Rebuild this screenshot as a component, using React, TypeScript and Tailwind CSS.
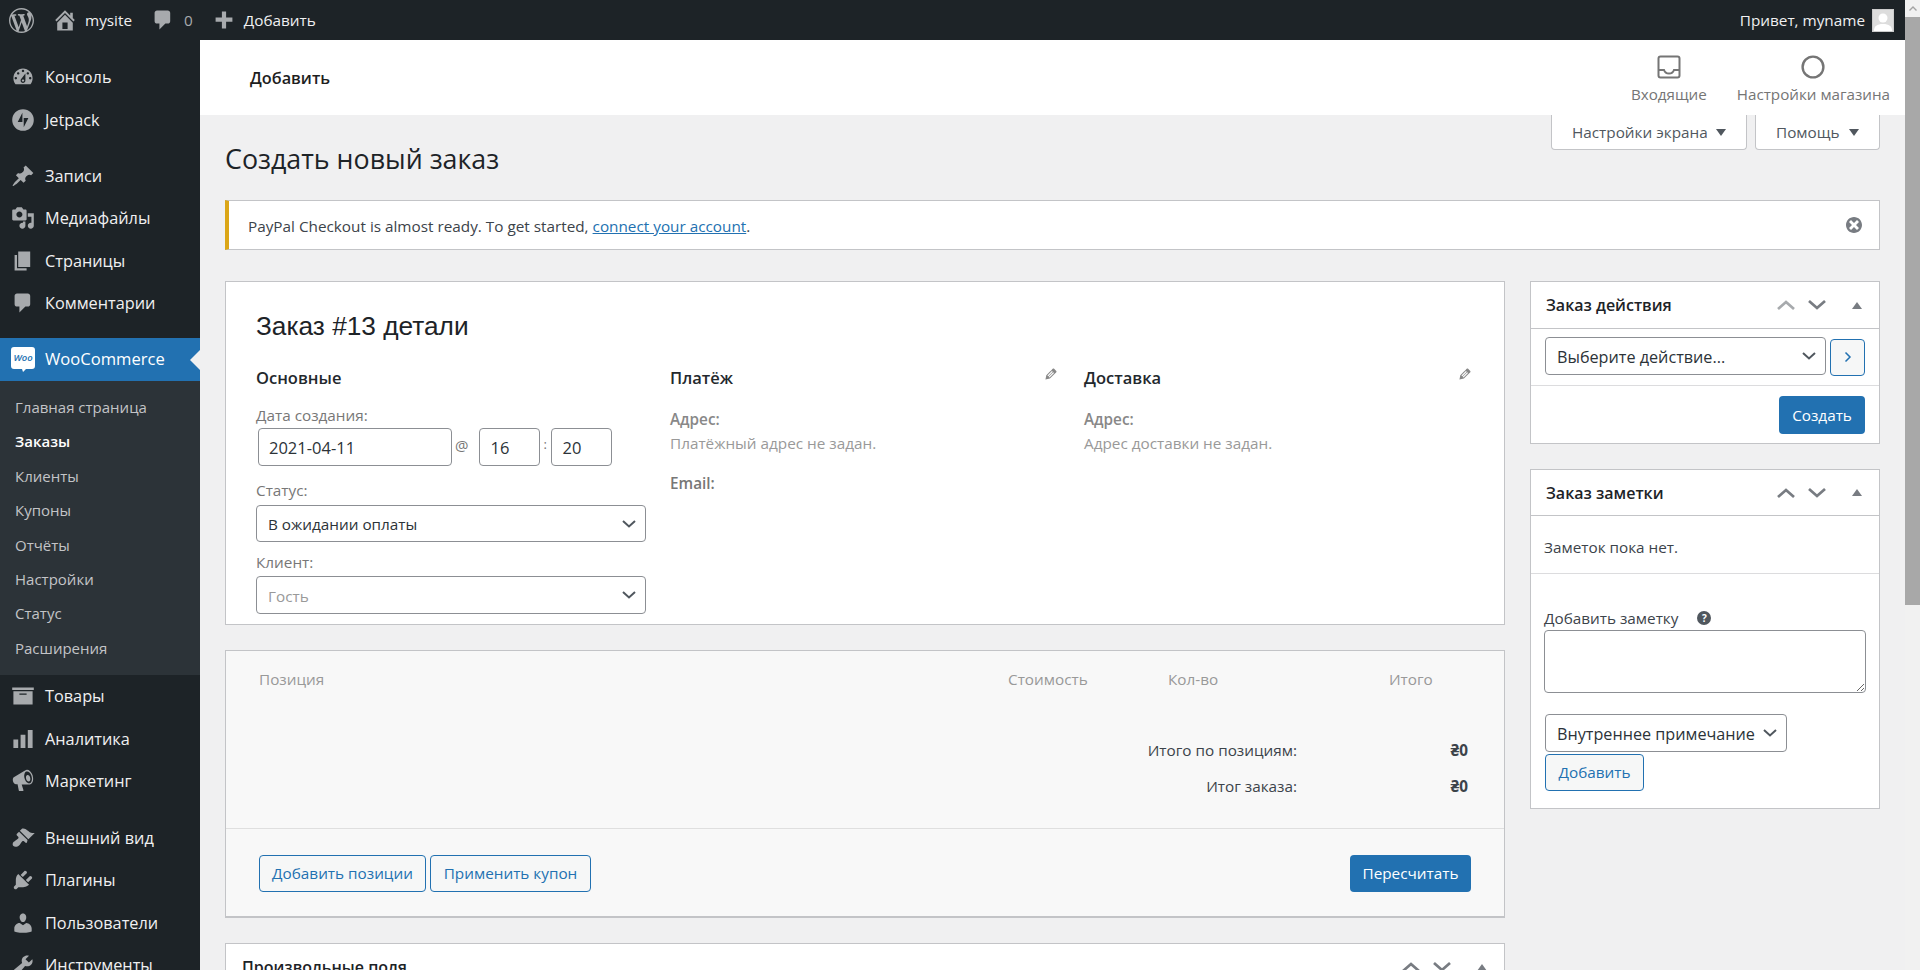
import React from "react";

const P: Record<string, string> = {
  dashboard: "M3.76 16h12.48c1.1-1.37 1.76-3.11 1.76-5 0-4.42-3.58-8-8-8s-8 3.58-8 8c0 1.89.66 3.63 1.76 5zM10 4c.55 0 1 .45 1 1s-.45 1-1 1-1-.45-1-1 .45-1 1-1zM6 6c.55 0 1 .45 1 1s-.45 1-1 1-1-.45-1-1 .45-1 1-1zm8 0c.55 0 1 .45 1 1s-.45 1-1 1-1-.45-1-1 .45-1 1-1zm-5.37 5.55L12 7v6c0 1.1-.9 2-2 2s-2-.9-2-2c0-.57.24-1.08.63-1.45zM4 10c.55 0 1 .45 1 1s-.45 1-1 1-1-.45-1-1 .45-1 1-1zm12 0c.55 0 1 .45 1 1s-.45 1-1 1-1-.45-1-1 .45-1 1-1zm-5 3c0-.55-.45-1-1-1s-1 .45-1 1 .45 1 1 1 1-.45 1-1z",
  jetpack: "M10 1a9 9 0 1 0 0 18 9 9 0 0 0 0-18zM9.5 4v7.6H5.6zM10.6 16V8.4h3.9z",
  pin: "M10.44 3.02l1.82-1.82 6.36 6.35-1.83 1.82c-1.05-.68-2.48-.57-3.41.36l-.75.75c-.92.93-1.04 2.35-.35 3.41l-1.83 1.82-2.41-2.41-2.8 2.79c-.42.42-3.38 2.71-3.8 2.29s1.86-3.39 2.28-3.81l2.79-2.79L4.1 9.36l1.83-1.82c1.05.69 2.48.57 3.4-.36l.75-.75c.93-.92 1.05-2.35.36-3.41z",
  media: "M13 11V4c0-.55-.45-1-1-1h-1.67L9 1H5L3.67 3H2c-.55 0-1 .45-1 1v7c0 .55.45 1 1 1h10c.55 0 1-.45 1-1zM7 4.5c1.38 0 2.5 1.12 2.5 2.5S8.38 9.5 7 9.5 4.5 8.38 4.5 7 5.62 4.5 7 4.5zM14 6h5v10.5c0 1.38-1.12 2.5-2.5 2.5S14 17.88 14 16.5s1.12-2.5 2.5-2.5c.17 0 .34.02.5.05V9h-3V6zm-4 8.05V13h2v3.5c0 1.38-1.12 2.5-2.5 2.5S7 17.88 7 16.5 8.12 14 9.5 14c.17 0 .34.02.5.05z",
  page: "M6 15V2h10v13H6zm-1 1h8v2H3V5h2v11z",
  comment: "M5 2h9c1.1 0 2 .9 2 2v7c0 1.1-.9 2-2 2h-2l-5 5v-5H5c-1.1 0-2-.9-2-2V4c0-1.1.9-2 2-2z",
  archive: "M19 3v2H1V3h18zM2 6h16v11H2V6zm11 3V8H7v1h6z",
  chart: "M18 2.5v15h-4v-15h4zM12 6.5v11H8v-11h4zM6 10.5v7H2v-7h4z",
  megaphone: "M18.15 5.94c.46 1.62.38 3.22-.02 4.48-.42 1.28-1.26 2.18-2.3 2.48-.16.06-.26.06-.4.06-.2.04-.4.04-.4.04H8.9l1.5 4.8c.02.14-.06.26-.14.34-.08.1-.24.16-.34.16H6.95c-.1 0-.26-.06-.34-.16-.08-.08-.16-.2-.14-.34l-1-5.1H4.25c-.5.06-1.08-.18-1.54-.62s-.88-1.08-1.06-1.88c-.24-.8-.2-1.56-.02-2.2.18-.62.58-1.08 1.06-1.3l9-5.42c.3-.2.6-.36.98-.46 1.04-.3 2.24.1 3.22.98s1.76 2.18 2.26 3.86zm-2.6 5.98c.4-.1.74-.34 1.04-.7.58-.7.86-1.76.86-3.04 0-.64-.1-1.3-.28-1.98-.34-1.36-1.02-2.5-1.78-3.24s-1.68-1.1-2.46-.88c-.82.22-1.4.96-1.7 2-.32 1.04-.28 2.36.06 3.72.38 1.36 1 2.5 1.8 3.24.78.74 1.62 1.1 2.46.88zM13.6 5c1-.3 2 .7 2.4 2.2.4 1.5 0 2.9-1 3.2-1 .2-2-.8-2.4-2.3-.4-1.5 0-2.8 1-3.1z",
  brush: "M14.48 11.06L7.41 3.99l1.5-1.5c.5-.56 2.3-.47 3.51.32 1.21.8 1.43 1.28 2.91 2.1 1.18.64 2.45 1.26 4.45.85zm-.71.71L6.7 4.7 4.93 6.47c-.39.39-.39 1.02 0 1.41l1.06 1.06c.39.39.39 1.03 0 1.42-.6.6-1.43 1.11-2.21 1.69-.35.26-.7.53-1.01.84C1.43 13.23.91 15.6 2.04 16.73s3.5.61 4.84-.73c.31-.31.58-.66.85-1.01.57-.78 1.08-1.61 1.69-2.21.39-.39 1.02-.39 1.41 0l1.06 1.06c.39.39 1.02.39 1.41 0z",
  plugin: "M13.11 4.36L9.87 7.6 8 5.73l3.24-3.24c.35-.34 1.05-.2 1.56.32.52.51.66 1.21.31 1.55zm-8 1.77l.91-1.12 9.01 9.01-1.19.84c-.71.71-2.63 1.16-3.82 1.16H6.14L4.9 17.26c-.59.59-1.54.59-2.12 0-.59-.58-.59-1.53 0-2.12l1.24-1.24v-3.88c0-1.13.4-3.19 1.09-3.89zm7.26 3.97l3.24-3.24c.34-.35 1.04-.21 1.55.31.52.51.66 1.21.31 1.55l-3.24 3.25z",
  users: "M10 9.25c-2.27 0-2.73-3.44-2.73-3.44C7 4.02 7.82 2 9.97 2c2.16 0 2.98 2.02 2.71 3.81 0 0-.41 3.44-2.68 3.44zm0 2.57L12.72 10c2.39 0 4.52 2.33 4.52 4.53v2.49s-3.65 1.13-7.24 1.13c-3.65 0-7.24-1.13-7.24-1.13v-2.49c0-2.25 1.94-4.48 4.47-4.48z",
  tools: "M16.68 9.77c-1.34 1.34-3.3 1.67-4.95.99l-5.41 6.52c-.99.99-2.59.99-3.58 0s-.99-2.59 0-3.57l6.52-5.42c-.68-1.65-.35-3.61.99-4.95 1.28-1.28 3.12-1.62 4.72-1.06l-2.89 2.89 2.82 2.82 2.86-2.87c.53 1.58.18 3.39-1.08 4.65zM3.81 16.21c.4.39 1.04.39 1.43 0 .4-.4.4-1.04 0-1.43-.39-.4-1.03-.4-1.43 0-.39.39-.39 1.03 0 1.43z",
  home: "M16 8.5l1.53 1.53-1.06 1.06L10 4.62l-6.47 6.47-1.06-1.06L10 2.5l4 4v-2h2v4zm-6-2.46l6 5.99V18H4v-5.97zM12 17v-5H8v5h4z",
  plus: "M17 8v3.5h-5.25V17h-3.5v-5.5H3V8h5.25V3h3.5v5H17z",
  wp: "M20 10c0-5.51-4.49-10-10-10C4.48 0 0 4.49 0 10c0 5.52 4.48 10 10 10 5.51 0 10-4.48 10-10zM7.78 15.37L4.37 6.22c.55-.02 1.17-.08 1.17-.08.5-.06.44-1.13-.06-1.11 0 0-1.45.11-2.37.11-.18 0-.37 0-.58-.01C4.12 2.69 6.87 1.11 10 1.11c2.33 0 4.45.87 6.05 2.34-.68-.11-1.65.39-1.65 1.58 0 .74.45 1.36.9 2.1.35.61.55 1.36.55 2.46 0 1.49-1.4 5-1.4 5l-3.03-8.37c.54-.02.82-.17.82-.17.5-.05.44-1.25-.06-1.22 0 0-1.44.12-2.38.12-.87 0-2.33-.12-2.33-.12-.5-.03-.56 1.2-.06 1.22l.92.08 1.26 3.41zM17.41 10c.24-.64.74-1.87.43-4.25.7 1.29 1.05 2.71 1.05 4.25 0 3.29-1.73 6.24-4.4 7.78.97-2.59 1.94-5.2 2.92-7.78zM6.1 18.09C3.12 16.65 1.11 13.53 1.11 10c0-1.3.23-2.48.72-3.59C3.25 10.3 4.67 14.2 6.1 18.09zm4.03-6.63l2.58 6.98c-.86.29-1.76.45-2.71.45-.79 0-1.57-.11-2.29-.33.81-2.38 1.62-4.74 2.42-7.1z",
  close: "M10 2c4.42 0 8 3.58 8 8s-3.58 8-8 8-8-3.58-8-8 3.58-8 8-8zm5 11l-3-3 3-3-2-2-3 3-3-3-2 2 3 3-3 3 2 2 3-3 3 3z",
  edit: "M13.89 3.39l2.71 2.72c.46.46.42 1.24.03 1.64l-8.01 8.02-5.56 1.16 1.16-5.58s7.6-7.63 7.99-8.03c.39-.39 1.22-.39 1.68.07zm-2.73 2.79l-5.59 5.61 1.11 1.11 5.54-5.65zm-2.97 8.23l5.58-5.6-1.07-1.08-5.59 5.6z",
};

function Dash({ name, className }: { name: string; className: string }) {
  return (
    <svg viewBox="0 0 20 20" className={className} fill="currentColor" aria-hidden="true">
      <path d={P[name]} />
    </svg>
  );
}

function Item({ icon, label }: { icon: string; label: string }) {
  return (
    <div className="flex h-[42.5px] shrink-0 items-center text-[16.3px] text-[#f0f0f1]">
      <div className="flex w-[45px] shrink-0 justify-center pl-[1px]">
        <Dash name={icon} className="h-6 w-6 text-[#a7aaad]" />
      </div>
      <span>{label}</span>
    </div>
  );
}

function WooLogo() {
  return (
    <svg viewBox="0 0 24 25" className="h-[25px] w-6" aria-hidden="true">
      <path d="M3 0h18a3 3 0 0 1 3 3v16a3 3 0 0 1-3 3h-6l-3 3-1-3H3a3 3 0 0 1-3-3V3a3 3 0 0 1 3-3z" fill="#fff" />
      <text x="12" y="14" textAnchor="middle" fontSize="9.5" fontStyle="italic" fontWeight="600" fill="#2271b1" fontFamily="Open Sans">
        Woo
      </text>
    </svg>
  );
}

function Sidebar() {
  const sub = ["Главная страница", "Заказы", "Клиенты", "Купоны", "Отчёты", "Настройки", "Статус", "Расширения"];
  return (
    <aside className="flex w-[200px] shrink-0 flex-col overflow-hidden bg-[#1d2327] pt-4">
      <Item icon="dashboard" label="Консоль" />
      <Item icon="jetpack" label="Jetpack" />
      <div className="h-[13.5px] shrink-0" />
      <Item icon="pin" label="Записи" />
      <Item icon="media" label="Медиафайлы" />
      <Item icon="page" label="Страницы" />
      <Item icon="comment" label="Комментарии" />
      <div className="h-[13.5px] shrink-0" />
      <div className="flex h-[42.5px] shrink-0 items-center bg-[#2271b1] pt-[1px] text-[16.6px] text-white">
        <div className="flex w-[45px] shrink-0 justify-center">
          <WooLogo />
        </div>
        <span>WooCommerce</span>
        <svg viewBox="0 0 10 20" className="ml-auto h-5 w-[10px]" aria-hidden="true">
          <path d="M10 0v20L0 10z" fill="#f0f0f1" />
        </svg>
      </div>
      <div className="flex h-[294.5px] shrink-0 flex-col bg-[#2c3338] pt-[9.5px]">
        {sub.map((s) => (
          <div
            key={s}
            className={
              s === "Заказы"
                ? "flex h-[34.4px] shrink-0 items-center pl-[15px] text-[15px] font-semibold text-white"
                : "flex h-[34.4px] shrink-0 items-center pl-[15px] text-[15px] text-[#c3c4c7]"
            }
          >
            {s}
          </div>
        ))}
      </div>
      <Item icon="archive" label="Товары" />
      <Item icon="chart" label="Аналитика" />
      <Item icon="megaphone" label="Маркетинг" />
      <div className="h-[14px] shrink-0" />
      <Item icon="brush" label="Внешний вид" />
      <Item icon="plugin" label="Плагины" />
      <Item icon="users" label="Пользователи" />
      <Item icon="tools" label="Инструменты" />
    </aside>
  );
}

function TopBar() {
  return (
    <header className="flex h-10 shrink-0 items-center bg-[#1d2327] text-[15.3px] text-[#f0f0f1]">
      <Dash name="wp" className="ml-[9px] h-[25px] w-[25px] text-[#a7aaad]" />
      <Dash name="home" className="ml-[18px] h-[26px] w-[26px] text-[#a7aaad]" />
      <span className="ml-[7px] pt-[1px]">mysite</span>
      <Dash name="comment" className="ml-[19px] h-[24px] w-[24px] text-[#a7aaad]" />
      <span className="ml-[9px] pt-[1px] text-[#a7aaad]">0</span>
      <Dash name="plus" className="ml-[19px] h-[24px] w-[24px] text-[#a7aaad]" />
      <span className="ml-[8px] pt-[1px]">Добавить</span>
      <span className="ml-auto mr-[7px] pt-[1px]">Привет, myname</span>
      <div className="mr-[11px] flex h-[23px] w-[22px] items-end justify-center overflow-hidden border border-[#ccc] bg-[#ddd]">
        <svg viewBox="0 0 20 20" className="h-5 w-5" fill="#fff" aria-hidden="true">
          <circle cx="10" cy="7" r="4.5" />
          <path d="M1 20c0-5 3-7 9-7s9 2 9 7z" />
        </svg>
      </div>
    </header>
  );
}

function WooHeader() {
  return (
    <div className="flex h-[75px] shrink-0 items-center bg-white pl-[50px] pr-[15px]">
      <span className="pt-[1px] text-[16.3px] font-semibold text-[#1e1e1e]">Добавить</span>
      <div className="ml-auto flex gap-[30px] pt-[4px] text-[15.2px] text-[#757575]">
        <div className="flex flex-col items-center">
          <svg viewBox="0 0 24 24" className="mt-[2px] h-6 w-6" fill="none" stroke="#757575" strokeWidth="2" aria-hidden="true">
            <rect x="1.5" y="1.5" width="21" height="21" rx="2" />
            <path d="M2 15h5c1 3 2.5 3.5 5 3.5s4-.5 5-3.5h5" />
          </svg>
          <span className="mt-[3px] leading-[24px]">Входящие</span>
        </div>
        <div className="flex flex-col items-center">
          <svg viewBox="0 0 24 24" className="mt-[2px] h-6 w-6" fill="none" stroke="#757575" strokeWidth="2.4" aria-hidden="true">
            <circle cx="12" cy="12" r="10.4" />
          </svg>
          <span className="mt-[3px] leading-[24px]">Настройки магазина</span>
        </div>
      </div>
    </div>
  );
}

function Tab({ label, className }: { label: string; className: string }) {
  return (
    <div className={"flex h-[35px] items-center justify-between rounded-b border border-t-0 border-[#c3c4c7] bg-white text-[15.3px] text-[#50575e] " + className}>
      <span>{label}</span>
      <svg viewBox="0 0 10 7" className="h-[7px] w-[10px]" aria-hidden="true">
        <path d="M0 0h10L5 7z" fill="#50575e" />
      </svg>
    </div>
  );
}

function Arrows({ upClass }: { upClass: string }) {
  return (
    <div className="ml-auto flex items-center">
      <svg viewBox="0 0 18 10" className={"h-[10px] w-[18px] " + upClass} fill="none" stroke="currentColor" strokeWidth="2.7" aria-hidden="true">
        <path d="M1 9l8-7 8 7" />
      </svg>
      <svg viewBox="0 0 18 10" className="ml-[13px] h-[10px] w-[18px] text-[#787c82]" fill="none" stroke="currentColor" strokeWidth="2.7" aria-hidden="true">
        <path d="M1 1l8 7 8-7" />
      </svg>
      <svg viewBox="0 0 10 7" className="ml-[26px] mr-[17px] h-[7px] w-[10px]" aria-hidden="true">
        <path d="M0 7h10L5 0z" fill="#787c82" />
      </svg>
    </div>
  );
}

function Select({ value, className, selectClass }: { value: string; className: string; selectClass: string }) {
  return (
    <div className={"relative " + className}>
      <select
        defaultValue={value}
        className={"h-full w-full appearance-none rounded border border-[#8c8f94] bg-white pl-[11px] pt-[2px] " + selectClass}
      >
        <option>{value}</option>
      </select>
      <svg viewBox="0 0 14 8" className="pointer-events-none absolute right-[10px] top-1/2 h-[8px] w-[14px] -translate-y-1/2" fill="none" stroke="#50575e" strokeWidth="2" aria-hidden="true">
        <path d="M1 1l6 5.5L13 1" />
      </svg>
    </div>
  );
}

function Address({ title, children }: { title: string; children: React.ReactNode }) {
  return (
    <div className="w-[390px] shrink-0">
      <div className="flex h-6 items-start justify-between">
        <h3 className="text-[16.5px] font-semibold leading-6 text-[#23282d]">{title}</h3>
        <Dash name="edit" className="mr-[1px] h-[16px] w-[16px] text-[#888]" />
      </div>
      {children}
    </div>
  );
}

function OrderBox() {
  const input = "h-[38px] rounded border border-[#8c8f94] bg-white pl-[10px] pt-[1px] text-[16.5px] text-[#2c3338]";
  return (
    <section className="h-[344px] shrink-0 border border-[#c3c4c7] bg-white pl-[30px] pr-[31px]">
      <h2 className="mt-[29px] font-['Liberation_Sans',sans-serif] text-[26.25px] font-normal leading-[30px] text-[#1d2327]">Заказ #13 детали</h2>
      <div className="mt-[25px] flex gap-[24px]">
        <div className="w-[390px] shrink-0 text-[#777]">
          <h3 className="text-[16.5px] font-semibold leading-6 text-[#23282d]">Основные</h3>
          <div className="mt-[15px] text-[15.3px] leading-[20px]">Дата создания:</div>
          <div className="mt-[3px] flex h-[38px] pl-[2px]">
            <input readOnly defaultValue="2021-04-11" className={input + " w-[194px]"} />
            <span className="ml-[3px] text-[15px] leading-[34px]">@</span>
            <input readOnly defaultValue="16" className={input + " ml-[11px] w-[61px]"} />
            <span className="mx-[3px] w-[5px] text-[13px] leading-[32px]">:</span>
            <input readOnly defaultValue="20" className={input + " w-[61px]"} />
          </div>
          <div className="mt-[14px] text-[15.3px] leading-[20px]">Статус:</div>
          <Select value="В ожидании оплаты" className="mt-[5px] h-[37px] w-[390px]" selectClass="text-[15.3px] text-[#2c3338]" />
          <div className="mt-[10px] text-[15.3px] leading-[20px]">Клиент:</div>
          <Select value="Гость" className="mt-[4px] h-[38px] w-[390px]" selectClass="text-[15.3px] text-[#999]" />
        </div>
        <Address title="Платёж">
          <div className="mt-[19px] text-[15.3px] font-semibold leading-[20px] text-[#888]">Адрес:</div>
          <div className="mt-[4px] text-[15.3px] leading-[20px] text-[#999]">Платёжный адрес не задан.</div>
          <div className="mt-[20px] text-[15.3px] font-semibold leading-[20px] text-[#777]">Email:</div>
        </Address>
        <Address title="Доставка">
          <div className="mt-[19px] text-[15.3px] font-semibold leading-[20px] text-[#888]">Адрес:</div>
          <div className="mt-[4px] text-[15.3px] leading-[20px] text-[#999]">Адрес доставки не задан.</div>
        </Address>
      </div>
    </section>
  );
}

function ItemsBox() {
  const ghost = "flex h-[37px] items-center justify-center rounded border border-[#2271b1] bg-[#f6f7f7] text-[15.3px] text-[#2271b1]";
  return (
    <section className="flex h-[268px] shrink-0 flex-col border border-b-2 border-[#c3c4c7] bg-[#f8f8f8]">
      <div className="flex h-[178px] shrink-0 flex-col border-b border-[#dfdfdf] pl-[33px] pr-[36px]">
        <div className="mt-[18px] flex text-[15.3px] leading-[20px] text-[#999]">
          <span className="w-[749px]">Позиция</span>
          <span className="w-[160px]">Стоимость</span>
          <span className="w-[221px]">Кол-во</span>
          <span>Итого</span>
        </div>
        <div className="mt-[51px] flex justify-end text-[15.3px] leading-[20px] text-[#3c434a]">
          <span>Итого по позициям:</span>
          <span className="w-[171px] text-right font-bold">₴0</span>
        </div>
        <div className="mt-[16px] flex justify-end text-[15.3px] leading-[20px] text-[#3c434a]">
          <span>Итог заказа:</span>
          <span className="w-[171px] text-right font-bold">₴0</span>
        </div>
      </div>
      <div className="flex pl-[33px] pr-[33px] pt-[26px]">
        <button className={ghost + " w-[167px]"}>Добавить позиции</button>
        <button className={ghost + " ml-[4px] w-[161px]"}>Применить купон</button>
        <button className="ml-auto flex h-[37px] w-[121px] items-center justify-center rounded bg-[#2271b1] text-[15.3px] text-white">Пересчитать</button>
      </div>
    </section>
  );
}

function Side() {
  const headTitle = "text-[16px] font-semibold text-[#1d2327]";
  return (
    <div className="flex w-[350px] shrink-0 flex-col gap-[25px]">
      <section className="h-[163px] border border-[#c3c4c7] bg-white">
        <div className="flex h-[47px] items-center border-b border-[#c3c4c7] pl-[15px]">
          <h2 className={headTitle}>Заказ действия</h2>
          <Arrows upClass="text-[#a7aaad]" />
        </div>
        <div className="flex h-[57px] items-center border-b border-[#dcdcde] pb-[2px] pl-[14px]">
          <Select value="Выберите действие..." className="h-[38px] w-[281px]" selectClass="text-[16.2px] text-[#2c3338]" />
          <button className="ml-[4px] mt-[2px] flex h-[37px] w-[35px] items-center justify-center rounded border border-[#2271b1] bg-[#f6f7f7]">
            <svg viewBox="0 0 8 12" className="h-3 w-2" fill="none" stroke="#2271b1" strokeWidth="1.5" aria-hidden="true">
              <path d="M1.5 1.5L6 6l-4.5 4.5" />
            </svg>
          </button>
        </div>
        <div className="flex justify-end pr-[14px] pt-[10px]">
          <button className="flex h-[38px] w-[86px] items-center justify-center rounded bg-[#2271b1] text-[15.3px] text-white">Создать</button>
        </div>
      </section>
      <section className="h-[340px] border border-[#c3c4c7] bg-white">
        <div className="flex h-[46px] items-center border-b border-[#c3c4c7] pl-[15px]">
          <h2 className={headTitle}>Заказ заметки</h2>
          <Arrows upClass="text-[#787c82]" />
        </div>
        <div className="flex h-[58px] items-center border-b border-[#dcdcde] pt-[6px] pl-[13px] text-[15.3px] text-[#3c434a]">Заметок пока нет.</div>
        <div className="flex flex-col pl-[13px]">
          <div className="mt-[34px] flex h-[20px] items-center text-[15.3px] text-[#3c434a]">
            <span>Добавить заметку</span>
            <span className="ml-[19px] flex h-[14px] w-[14px] items-center justify-center rounded-full bg-[#50575e] text-[10px] font-bold text-white">?</span>
          </div>
          <textarea readOnly className="mt-[2px] h-[63px] w-[322px] rounded border border-[#8c8f94] bg-white" />
          <Select value="Внутреннее примечание" className="ml-[1px] mt-[21px] h-[38px] w-[242px]" selectClass="text-[16.2px] text-[#2c3338]" />
          <button className="ml-[1px] mt-[2px] flex h-[37px] w-[99px] items-center justify-center rounded border border-[#2271b1] bg-[#f6f7f7] text-[15.3px] text-[#2271b1]">Добавить</button>
        </div>
      </section>
    </div>
  );
}

export default function App() {
  return (
    <div className="flex h-[970px] w-full overflow-hidden bg-[#f0f0f1] font-['Open_Sans','Noto_Sans',sans-serif]">
      <div className="flex min-w-0 flex-1 flex-col">
        <TopBar />
        <div className="flex min-h-0 flex-1">
          <Sidebar />
          <main className="flex min-w-0 flex-1 flex-col">
            <WooHeader />
            <div className="flex flex-col px-[25px]">
              <div className="flex h-[85px] shrink-0 items-start justify-between">
                <h1 className="mt-[25px] text-[26.8px] font-normal leading-[38px] text-[#1d2327]">Создать новый заказ</h1>
                <div className="flex gap-2">
                  <Tab label="Настройки экрана" className="w-[196px] pl-[20px] pr-[20px]" />
                  <Tab label="Помощь" className="w-[125px] pl-[20px] pr-[20px]" />
                </div>
              </div>
              <div className="flex h-[50px] shrink-0 items-center border border-l-4 border-[#c3c4c7] border-l-[#dba617] bg-white pl-[19px] pr-[15px] pt-[3px] text-[15.3px] text-[#3c434a]">
                <span>
                  PayPal Checkout is almost ready. To get started,{" "}
                  <a className="text-[#2271b1] underline">connect your account</a>.
                </span>
                <Dash name="close" className="ml-auto mt-[-3px] h-5 w-5 text-[#787c82]" />
              </div>
              <div className="mt-[31px] flex gap-[25px]">
                <div className="flex w-[1280px] shrink-0 flex-col gap-[25px]">
                  <OrderBox />
                  <ItemsBox />
                  <section className="h-[60px] shrink-0 border border-[#c3c4c7] bg-white">
                    <div className="flex h-[46px] items-center pl-[16px]">
                      <h2 className="text-[16px] font-semibold text-[#1d2327]">Произвольные поля</h2>
                      <Arrows upClass="text-[#787c82]" />
                    </div>
                  </section>
                </div>
                <Side />
              </div>
            </div>
          </main>
        </div>
      </div>
      <div className="flex w-[15px] shrink-0 flex-col bg-[#f1f1f1]">
        <div className="flex h-[17px] items-center justify-center">
          <svg viewBox="0 0 8 5" className="h-[5px] w-2" fill="none" stroke="#a3a3a3" strokeWidth="1.4" aria-hidden="true">
            <path d="M.5 4.5L4 1l3.5 3.5" />
          </svg>
        </div>
        <div className="h-[588px] bg-[#a8a8a8]" />
      </div>
    </div>
  );
}
